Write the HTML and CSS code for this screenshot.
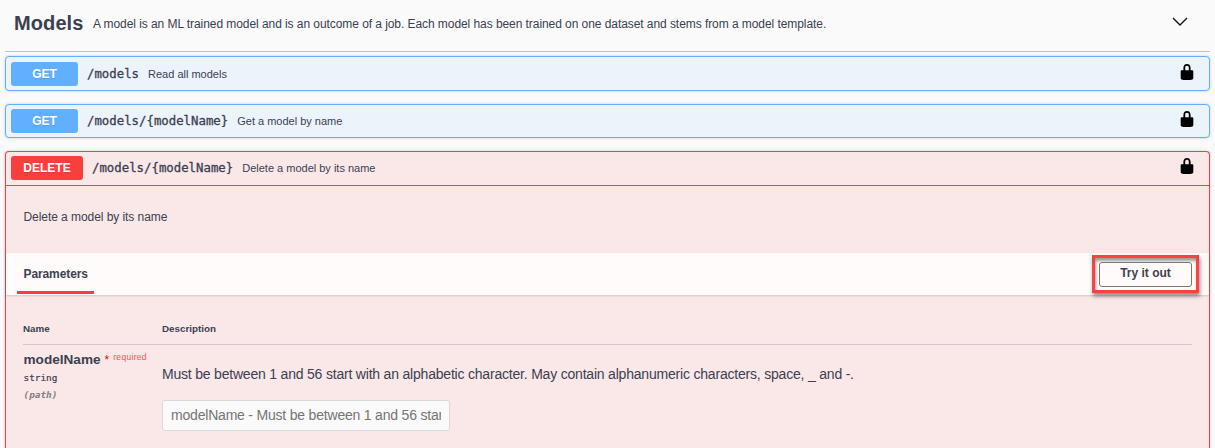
FILE: index.html
```
<!DOCTYPE html>
<html lang="en">
<head>
<meta charset="utf-8">
<title>Models API</title>
<link rel="stylesheet" href="styles.css">
</head>
<body>
<svg class="defs" width="0" height="0"><symbol id="lock" viewBox="0 0 20 20"><path d="M15.8 8H14V5.6C14 2.703 12.665 1 10 1 7.334 1 6 2.703 6 5.6V8H4c-.553 0-1 .646-1 1.199V17c0 .549.428 1.139.951 1.307l1.197.387C5.672 18.861 6.55 19 7.1 19h5.8c.549 0 1.428-.139 1.951-.307l1.196-.387c.524-.167.953-.757.953-1.306V9.199C17 8.646 16.352 8 15.8 8zM12 8H8V5.199C8 3.754 8.797 3 10 3c1.203 0 2 .754 2 2.199V8z"/></symbol></svg>
<main class="api">
  <header class="tag">
    <h1 class="tag-title">Models</h1>
    <p class="tag-text">A model is an ML trained model and is an outcome of a job. Each model has been trained on one dataset and stems from a model template.</p>
    <svg class="chevron" viewBox="0 0 16 9"><path d="M1 1l7 7 7-7"/></svg>
  </header>
  <section class="op get first">
    <div class="summary"><span class="method">GET</span><span class="path">/models</span><span class="about">Read all models</span><svg class="lock"><use href="#lock"/></svg></div>
  </section>
  <section class="op get">
    <div class="summary"><span class="method">GET</span><span class="path">/models/{modelName}</span><span class="about">Get a model by name</span><svg class="lock"><use href="#lock"/></svg></div>
  </section>
  <section class="op delete">
    <div class="summary"><span class="method">DELETE</span><span class="path">/models/{modelName}</span><span class="about">Delete a model by its name</span><svg class="lock"><use href="#lock"/></svg></div>
    <p class="details">Delete a model by its name</p>
    <div class="section-bar">
      <h2 class="tab">Parameters</h2>
      <div class="callout"><button class="try">Try it out</button></div>
    </div>
    <div class="params">
      <div class="param-head"><span>Name</span><span>Description</span></div>
      <div class="param">
        <div class="param-meta">
          <div class="param-name">modelName<span class="star">*</span><span class="required">required</span></div>
          <div class="param-type">string</div>
          <div class="param-in">(path)</div>
        </div>
        <div class="param-body">
          <p class="param-text">Must be between 1 and 56 start with an alphabetic character. May contain alphanumeric characters, space, _ and -.</p>
          <input class="field" type="text" placeholder="modelName - Must be between 1 and 56 start with an alphabetic character">
        </div>
      </div>
    </div>
  </section>
</main>
</body>
</html>
```

FILE: styles.css
```
* { box-sizing: border-box; }
body { margin: 0; height: 448px; overflow: hidden; background: #fafafa; color: #3b4151; font-family: "Liberation Sans", Arial, sans-serif; }
h1, h2, p { margin: 0; }
.defs { display: block; }
.api { padding: 0 5px; }
.tag { display: flex; align-items: center; height: 52px; padding: 0 22px 6px 9px; border-bottom: 1px solid #bfc0c2; }
.tag-title { font-size: 20px; line-height: 24px; width: 79px; letter-spacing: .1px; }
.tag-text { font-size: 12px; line-height: 16px; padding-top: 2px; letter-spacing: -.066px; }
.chevron { width: 16px; height: 9px; margin-left: auto; margin-top: -2px; fill: none; stroke: #111; stroke-width: 1.4; }
.op { border: 1px solid; border-radius: 4px; margin-bottom: 13px; box-shadow: 0 0 3px rgba(0,0,0,.19); }
.first { margin-top: 4px; }
.get { border-color: #61affe; background: #ebf3fb; height: 34px; }
.get.first { height: 35px; }
.delete { border-color: #f93e3e; border-bottom: 0; border-radius: 4px 4px 0 0; background: #fae7e7; height: 297px; margin-bottom: 0; }
.summary { display: flex; align-items: center; height: 32px; padding: 0 13px 0 5px; }
.first .summary { height: 34px; }
.delete .summary { height: 34px; padding-bottom: 1px; border-bottom: 1px solid #f93e3e; }
.method { width: 67px; height: 24px; border-radius: 3px; background: #61affe; color: #fff; font-size: 12px; font-weight: bold; line-height: 24px; text-align: center; text-shadow: 0 1px 0 rgba(0,0,0,.1); }
.delete .method { width: 72px; background: #f93e3e; }
.path { margin-left: 9px; font: 12.35px/18px "DejaVu Sans Mono", monospace; -webkit-text-stroke: .3px; }
.about { margin-left: 9px; font-size: 11px; line-height: 16px; }
.lock { width: 18px; height: 18px; margin: -4px 0 0 auto; fill: #000; }
.first .lock { margin-top: -5px; }
.details { height: 67px; padding: 23px 17.5px 0; font-size: 12px; line-height: 16px; letter-spacing: -.06px; }
.section-bar { display: flex; justify-content: space-between; height: 42px; padding: 0 10px 0 11px; background: #fffbfa; box-shadow: 0 1px 2px rgba(0,0,0,.15); }
.tab { width: 77px; height: 41px; padding: 12px 6.5px 0; border-bottom: 3px solid #f93e3e; font-size: 12px; line-height: 18px; letter-spacing: -.1px; }
.callout { width: 107px; height: 38px; margin-top: 2px; padding: 4px; border: 3px solid #fb4141; box-shadow: 1px 3px 4px rgba(0,0,0,.45), inset 1px 3px 3px rgba(0,0,0,.38); }
.try { display: block; width: 93px; height: 25px; padding: 0 0 3px; border: 1px solid #777; border-radius: 3px; background: #fffbfa; color: #3b4151; font: bold 12px/18px "Liberation Sans", Arial, sans-serif; }
.params { padding: 27px 17px 0; }
.param-head { display: grid; grid-template-columns: 139px 1fr; height: 23px; border-bottom: 1px solid #d6c6ca; font-size: 9.8px; font-weight: bold; line-height: 14px; }
.param { display: grid; grid-template-columns: 139px 1fr; padding-top: 7px; }
.param-meta { padding-left: .5px; }
.param-name { font-size: 13.6px; font-weight: bold; line-height: 16px; white-space: nowrap; }
.star { margin-left: 4px; color: #f00; font-size: 12px; font-weight: normal; }
.required { margin-left: 4px; color: #fc5555; font-size: 8.5px; font-weight: normal; vertical-align: 4px; line-height: 1; letter-spacing: .3px; }
.param-type, .param-in { font: bold 9.4px/17px "DejaVu Sans Mono", monospace; }
.param-type { font-weight: normal; -webkit-text-stroke: .2px; margin-top: 1px; }
.param-in { color: #808080; font-style: italic; }
.param-text { padding-top: 14px; font-size: 14px; line-height: 16px; letter-spacing: -.2px; }
.field { display: block; width: 288px; height: 31px; margin-top: 18px; padding: 0 8px 2px; border: 1px solid #d9d9d9; border-radius: 3px; background: #fafafa; font: 14px "Liberation Sans", Arial, sans-serif; letter-spacing: -.2px; }
.field::placeholder { color: #757575; }
```
